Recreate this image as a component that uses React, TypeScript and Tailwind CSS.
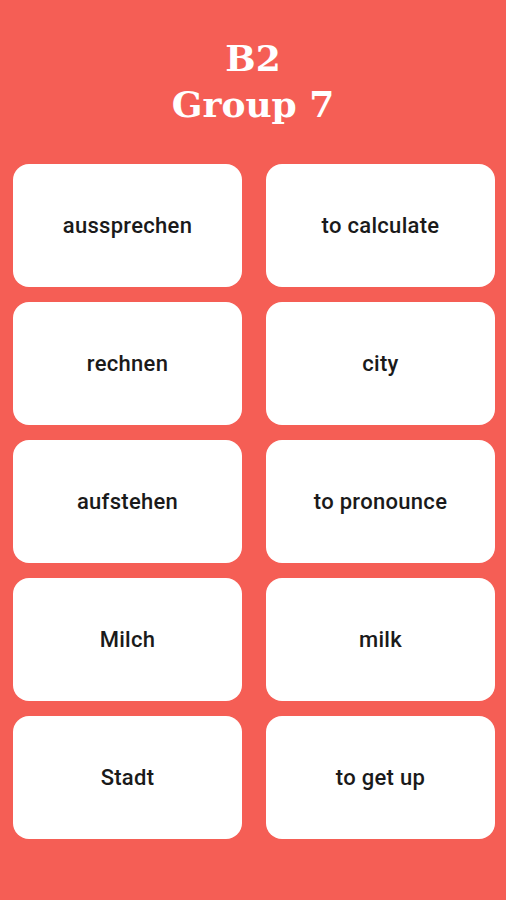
export default function App() {
  const rows = [
    ["aussprechen", "to calculate"],
    ["rechnen", "city"],
    ["aufstehen", "to pronounce"],
    ["Milch", "milk"],
    ["Stadt", "to get up"],
  ];
  return (
    <div className="w-[506px] h-[900px] bg-[#f55e55] flex flex-col">
      <div
        className="pt-[35px] h-[164px] text-white text-center font-bold text-[36px] leading-[46px]"
        style={{ fontFamily: '"DejaVu Serif", "Liberation Serif", serif' }}
      >
        <div>B2</div>
        <div>Group 7</div>
      </div>
      <div className="grid grid-cols-[229px_229px] gap-x-[24px] gap-y-[15px] pl-[13px]">
        {rows.flat().map((t, i) => (
          <div
            key={i}
            className="h-[123px] bg-white rounded-[16px] flex items-center justify-center text-[22px] tracking-[0.3px] font-medium text-[#1a1a1a]"
            style={{ fontFamily: 'Roboto, "Noto Sans", sans-serif' }}
          >
            {t}
          </div>
        ))}
      </div>
    </div>
  );
}
